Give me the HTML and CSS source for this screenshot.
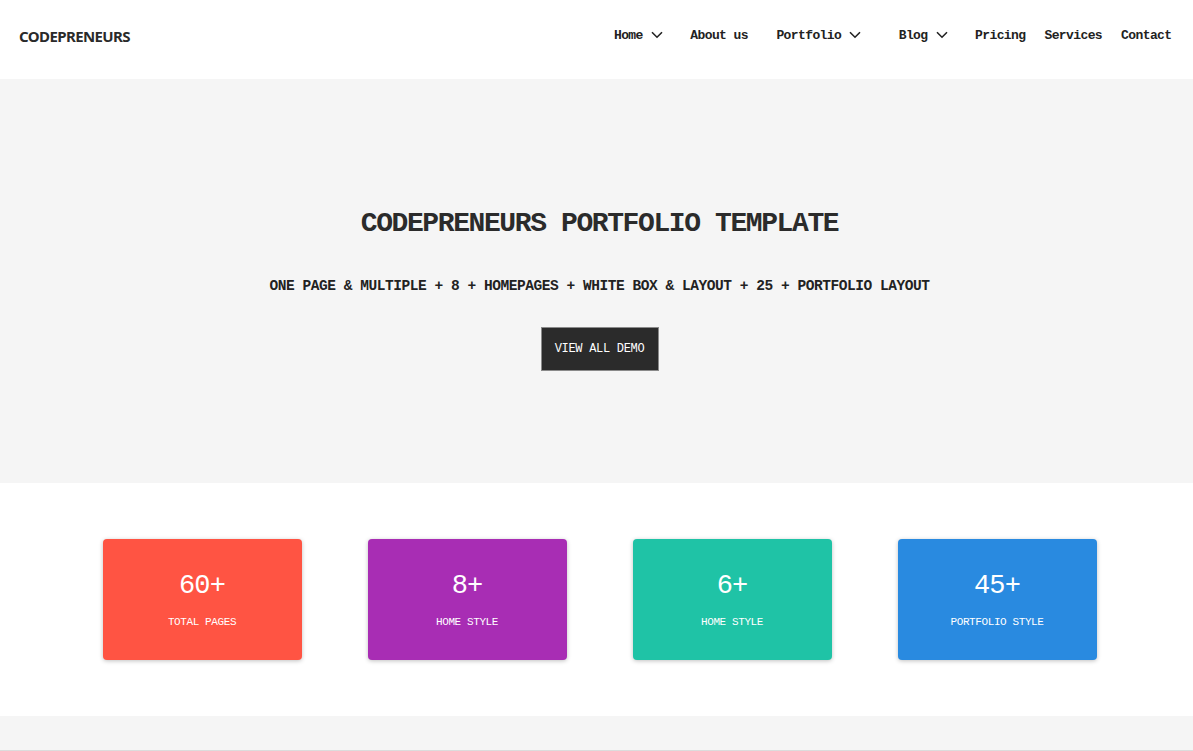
FILE: index.html
```html
<!DOCTYPE html>
<html lang="en">
<head>
<meta charset="utf-8">
<title>Codepreneurs</title>
<link rel="stylesheet" href="styles.css">
</head>
<body>
<header class="topbar">
  <a class="logo" href="#">CODEPRENEURS</a>
  <nav class="nav">
    <a class="nav-link has-drop" href="#">Home <svg class="chev" viewBox="0 0 12 8" width="12" height="8"><path d="M1 1.2 L6 6.2 L11 1.2" /></svg></a>
    <a class="nav-link spaced" href="#">About us</a>
    <a class="nav-link has-drop wide" href="#">Portfolio <svg class="chev" viewBox="0 0 12 8" width="12" height="8"><path d="M1 1.2 L6 6.2 L11 1.2" /></svg></a>
    <a class="nav-link has-drop" href="#">Blog <svg class="chev" viewBox="0 0 12 8" width="12" height="8"><path d="M1 1.2 L6 6.2 L11 1.2" /></svg></a>
    <a class="nav-link" href="#">Pricing</a>
    <a class="nav-link" href="#">Services</a>
    <a class="nav-link" href="#">Contact</a>
  </nav>
</header>

<section class="hero">
  <h1 class="hero-title">CODEPRENEURS PORTFOLIO TEMPLATE</h1>
  <p class="hero-sub">ONE PAGE &amp; MULTIPLE + 8 + HOMEPAGES + WHITE BOX &amp; LAYOUT + 25 + PORTFOLIO LAYOUT</p>
  <a class="btn" href="#">VIEW ALL DEMO</a>
</section>

<section class="stats">
  <div class="stat red"><div class="stat-num">60+</div><div class="stat-label">TOTAL PAGES</div></div>
  <div class="stat purple"><div class="stat-num">8+</div><div class="stat-label">HOME STYLE</div></div>
  <div class="stat teal"><div class="stat-num">6+</div><div class="stat-label">HOME STYLE</div></div>
  <div class="stat blue"><div class="stat-num">45+</div><div class="stat-label">PORTFOLIO STYLE</div></div>
</section>

<section class="next"></section>
</body>
</html>
```
FILE: styles.css
```css
* { box-sizing: border-box; }
html, body { margin: 0; padding: 0; }
body {
  font-family: "Liberation Mono", "DejaVu Sans Mono", monospace;
  color: #2b2b2b;
  background: #fff;
  overflow: hidden;
}
a { text-decoration: none; color: inherit; }

.topbar {
  height: 79px;
  display: flex;
  align-items: center;
  justify-content: space-between;
  padding: 0 12px 0 19px;
  background: #fff;
}
.logo {
  font-family: "Noto Sans", "Open Sans", sans-serif;
  font-weight: 700;
  font-size: 15px;
  letter-spacing: -0.6px;
  color: #2a2a2a;
  margin-top: -7px;
}
.nav {
  display: flex;
  align-items: center;
  margin-top: -9px;
}
.nav-link {
  display: flex;
  align-items: center;
  font-size: 13px;
  letter-spacing: -0.6px;
  font-weight: 700;
  color: #222;
  padding: 0 9.5px;
}
.nav-link.has-drop { padding-right: 18px; }
.nav-link.spaced { padding-right: 19px; }
.nav-link.wide { padding-right: 28px; }
.chev {
  margin-left: 8px;
  fill: none;
  stroke: #222;
  stroke-width: 1.6;
}

.hero {
  background: #f5f5f5;
  height: 404px;
  display: flex;
  flex-direction: column;
  align-items: center;
  padding: 129px 0 0 6px;
}
.hero-title {
  margin: 0;
  font-size: 28px;
  letter-spacing: -1.4px;
  line-height: 32px;
  font-weight: 700;
  color: #2b2b2b;
}
.hero-sub {
  margin: 37px 0 0;
  font-size: 14.5px;
  letter-spacing: -0.45px;
  line-height: 18px;
  font-weight: 700;
  color: #222;
}
.btn {
  margin-top: 32px;
  width: 118px;
  height: 44px;
  display: flex;
  align-items: center;
  justify-content: center;
  background: #2b2b2b;
  border: 1px solid #8a8a8a;
  color: #fff;
  font-size: 12px;
  letter-spacing: -0.3px;
}

.stats {
  height: 233px;
  display: flex;
  justify-content: center;
  gap: 66px;
  padding: 56px 0 0 6px;
  background: #fff;
}
.stat {
  width: 199px;
  height: 121px;
  border-radius: 4px;
  box-shadow: 0 1px 4px rgba(0,0,0,0.25);
  color: #fff;
  display: flex;
  flex-direction: column;
  align-items: center;
  padding-top: 31px;
}
.stat-num {
  font-size: 27px;
  letter-spacing: -0.9px;
  line-height: 32px;
}
.stat-label {
  margin-top: 13px;
  font-size: 11px;
  letter-spacing: -0.4px;
  line-height: 14px;
}
.red { background: #ff5443; }
.purple { background: #a82db4; }
.teal { background: #1fc3a6; }
.blue { background: #298ae0; }

.next {
  height: 35px;
  background: #f5f5f5;
  border-bottom: 1px solid #dcdcdc;
}
```
